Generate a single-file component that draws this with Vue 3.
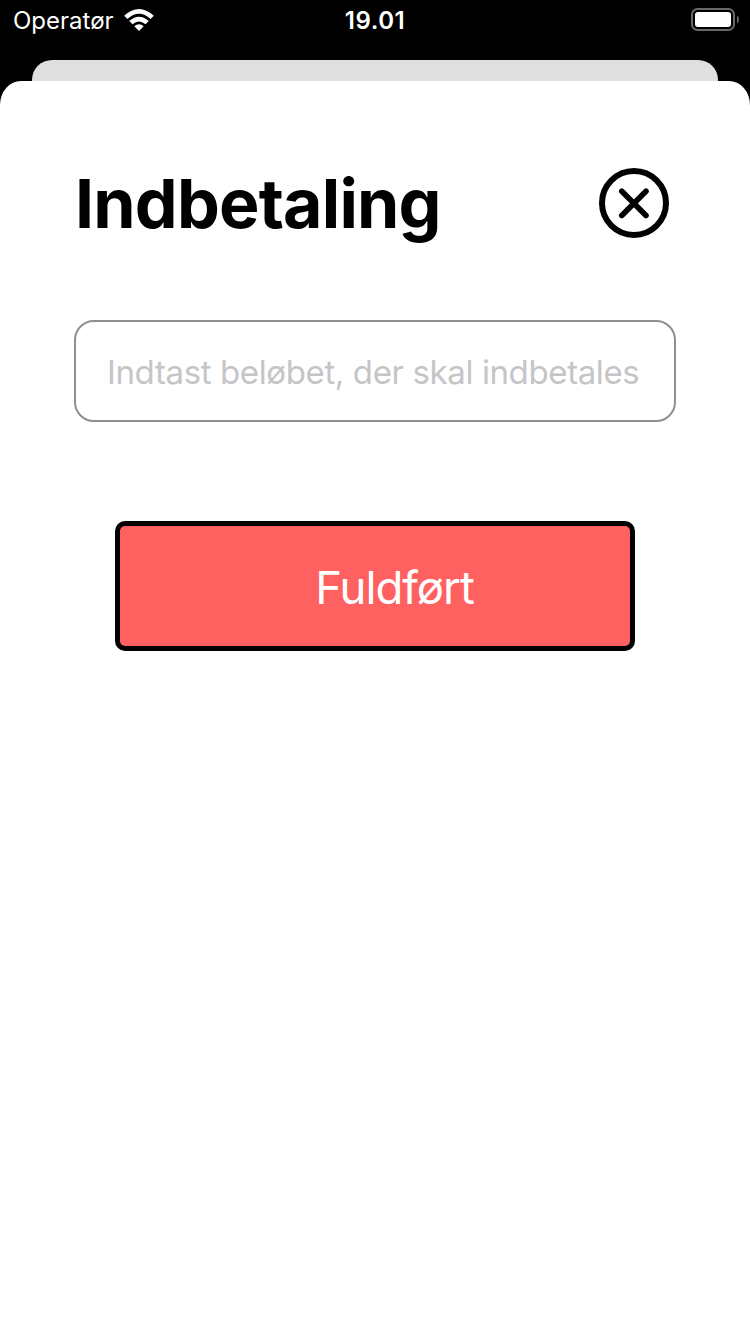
<script setup>
import { ref } from 'vue'

const amount = ref('')
</script>

<template>
  <div class="screen">
    <header class="status">
      <div class="carrier">
        <span class="operator">Operatør</span>
        <svg class="wifi" width="30" height="23" viewBox="0 0 30 23">
          <path d="M0.2 6.8Q15 -6.6 29.8 6.8L26.6 10.1Q15 -0.4 3.4 10.1Z" fill="#fff" />
          <path d="M5.2 12Q15 3.4 24.8 12L21.5 15.3Q15 9.5 8.5 15.3Z" fill="#fff" />
          <path d="M10.3 17.2Q15 13.2 19.7 17.2L15 22Z" fill="#fff" />
        </svg>
      </div>
      <span class="time">19.01</span>
      <svg class="battery" width="49" height="24" viewBox="0 0 49 24">
        <rect x="1" y="1" width="42" height="21" rx="5.5" fill="none" stroke="#686868" stroke-width="2" />
        <rect x="4" y="4" width="36" height="15" rx="3" fill="#fff" />
        <path d="M46 7.5Q48 8.5 48 11.5T46 15.5Z" fill="#686868" />
      </svg>
    </header>
    <div class="behind"></div>
    <main class="sheet">
      <div class="heading">
        <h1>Indbetaling</h1>
        <button class="close" aria-label="Luk">
          <svg width="70" height="70" viewBox="0 0 70 70" fill="none" stroke="#000">
            <circle cx="35" cy="35" r="32" stroke-width="6" />
            <path d="M22.8 23.2L47 47.4M47 23.2L22.8 47.4" stroke-width="5.6" stroke-linecap="round" />
          </svg>
        </button>
      </div>
      <input v-model="amount" class="amount" placeholder="Indtast beløbet, der skal indbetales" />
      <button class="submit"><span>Fuldført</span></button>
    </main>
  </div>
</template>

<style>
body {
  background: #000;
}
</style>

<style scoped>
.screen {
  display: flex;
  flex-direction: column;
  width: 750px;
  height: 1334px;
  overflow: hidden;
  background: #000;
  font-family: Inter, "Liberation Sans", sans-serif;
}
.status {
  display: grid;
  grid-template-columns: 1fr auto 1fr;
  align-items: start;
  height: 60px;
  padding: 0 10px 0 13px;
  box-sizing: border-box;
  color: #fff;
  font-size: 24px;
  line-height: 30px;
}
.carrier {
  display: flex;
  padding-top: 6px;
}
.operator {
  width: 111px;
}
.wifi {
  margin-top: 3px;
}
.time {
  padding: 6px 3px 0 0;
  font-weight: 600;
  letter-spacing: 0.5px;
}
.battery {
  justify-self: end;
  margin-top: 8px;
}
.behind {
  flex: none;
  height: 21px;
  margin: 0 32px;
  border-radius: 20px 20px 0 0;
  background: #dfdfdf;
}
.sheet {
  flex: 1;
  display: flex;
  flex-direction: column;
  align-items: center;
  padding-top: 87px;
  border-radius: 21px 21px 0 0 / 24px 24px 0 0;
  background: #fff;
}
.heading {
  display: flex;
  justify-content: space-between;
  align-items: center;
  width: 602px;
  height: 70px;
  padding: 0 7px 0 1px;
  box-sizing: border-box;
}
h1 {
  margin: 0;
  font-size: 68px;
  font-weight: 700;
  line-height: 80px;
  letter-spacing: -0.8px;
}
button {
  padding: 0;
  border: 0;
  background: none;
  font-family: inherit;
}
.close,
.close svg {
  display: block;
}
.amount {
  width: 602px;
  height: 102px;
  margin-top: 82px;
  padding: 1px 28px 0 31px;
  box-sizing: border-box;
  border: 2px solid #8e8e93;
  border-radius: 20px;
  outline: 0;
  background: #fff;
  font-family: inherit;
  font-size: 33px;
  letter-spacing: -0.38px;
}
.amount::placeholder {
  color: #c5c5c7;
  opacity: 1;
}
.submit {
  width: 520px;
  height: 130px;
  margin-top: 99px;
  padding: 2px 0 0 39px;
  border: 5px solid #000;
  border-radius: 10px;
  background: #ff6161;
  color: #fff;
  font-size: 45.5px;
  letter-spacing: -1px;
}
</style>
